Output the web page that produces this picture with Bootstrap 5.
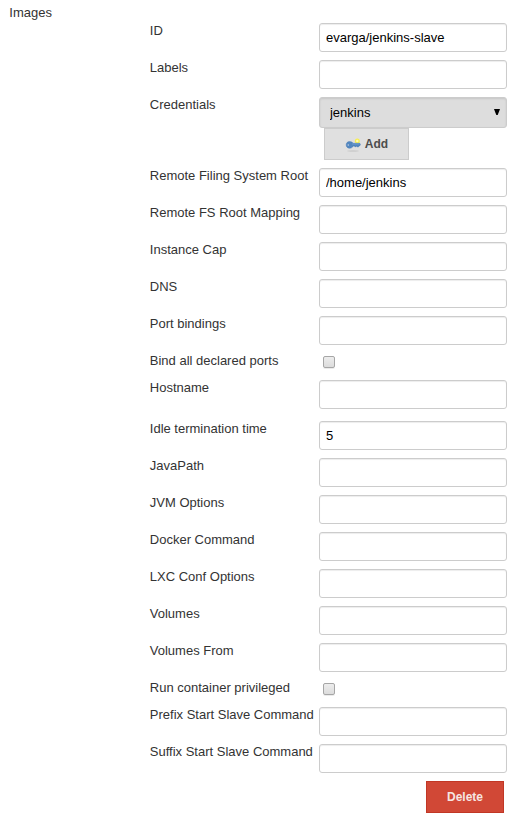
<!DOCTYPE html>
<html lang="en">
<head>
<meta charset="utf-8">
<title>Images</title>
<meta name="viewport" content="width=device-width, initial-scale=1">
<link href="https://cdn.jsdelivr.net/npm/bootstrap@5.3.0/dist/css/bootstrap.min.css" rel="stylesheet">
<style>
body{font-family:"Liberation Sans",Arial,sans-serif;font-size:13px;line-height:15px;color:#333;background:#fff}
.page{width:520px;height:822px;padding:5px 13px 0 9px;overflow:hidden}
.section-title{height:18px;padding-left:.3px}
.fields{padding-left:140.8px}
.field{height:37px}
.field-check{height:27px}
.field-tall{height:41px}
.field-cred{height:71px}
.field-label{width:169.2px;font-size:13px;line-height:15px;white-space:nowrap}
.field-box{width:188px}
.fields .form-control,.fields .form-select{font-size:13px;line-height:15px;color:#000;border:1px solid #ccc;border-radius:3px;box-shadow:inset 0 1px 1px rgba(0,0,0,.075)}
.fields .form-control{height:29px;min-height:0;padding:6px}
.fields .form-select{height:31px;padding:7px 20px 7px 10px;background:#ddd;box-shadow:inset 0 1px 2px rgba(0,0,0,.1)}
.arrow{right:7px;top:12px;width:6px;height:6px}
.add-btn{width:85px;height:32px;margin-left:5px;padding:0 0 0 1px;font-size:12px;line-height:15px;font-weight:700;color:#4d4d4d;background:#e0e0e0;border:1px solid #ccc;border-radius:0;gap:4px}
.key-icon{margin-left:-1px}
.fields .form-check-input{width:12px;height:12px;margin:3px 0 0 4px;border:1px solid #a6a6a6;border-radius:2px;background:linear-gradient(#ededed,#dcdcdc);box-shadow:0 1px 0 rgba(0,0,0,.08)}
.delete-btn{width:78px;height:32px;margin-right:3px;padding:0;font-size:12px;line-height:15px;font-weight:700;color:#f6e5e2;background:#d14836;border:1px solid #c13725;border-radius:0}
</style>
<script src="https://cdn.jsdelivr.net/npm/bootstrap@5.3.0/dist/js/bootstrap.bundle.min.js"></script>
</head>
<body>
<main class="page">
<div class="section-title">Images</div>
<form class="fields">
<div class="field d-flex"><label class="field-label" for="f1">ID</label><div class="field-box"><input id="f1" class="form-control" type="text" value="evarga/jenkins-slave"></div></div>
<div class="field d-flex"><label class="field-label" for="f2">Labels</label><div class="field-box"><input id="f2" class="form-control" type="text"></div></div>
<div class="field-cred d-flex"><label class="field-label" for="f3">Credentials</label><div class="field-box">
<div class="position-relative"><select id="f3" class="form-select"><option>jenkins</option></select>
<svg class="arrow position-absolute pe-none" viewBox="0 0 6 6"><path d="M0 0h6L3.700 6H2.300z" fill="#000"/></svg></div>
<button type="button" class="btn add-btn d-flex align-items-center justify-content-center">
<svg class="key-icon" width="16" height="16" viewBox="0 0 16 16"><ellipse cx="8" cy="15" rx="6" ry=".7" fill="#cacaca"/><circle cx="12.300" cy="5" r="2.500" fill="#f7ee50"/><circle cx="12.300" cy="5" r="1.200" fill="#fffbb5"/><path d="M4.500 5.600c1.900 0 3 .8 3.600 1.700h6.700l.6 1.200-.8 1.500h-1.100v.9h-1.300v-.9h-1v.7H9.800v-.7H8.200c-.6 1.400-1.800 2.200-3.700 2.200C2.400 12.200 1.200 10.800 1.200 8.900s1.200-3.300 3.300-3.300z" fill="#5287c0" stroke="#4479b2" stroke-width=".5"/><path d="M7 8h7.500" stroke="#7da5d0" stroke-width=".7"/><circle cx="3.300" cy="9" r=".8" fill="#c0cfdf"/></svg>
<span>Add</span></button></div></div>
<div class="field d-flex"><label class="field-label" for="f4">Remote Filing System Root</label><div class="field-box"><input id="f4" class="form-control" type="text" value="/home/jenkins"></div></div>
<div class="field d-flex"><label class="field-label" for="f5">Remote FS Root Mapping</label><div class="field-box"><input id="f5" class="form-control" type="text"></div></div>
<div class="field d-flex"><label class="field-label" for="f6">Instance Cap</label><div class="field-box"><input id="f6" class="form-control" type="text"></div></div>
<div class="field d-flex"><label class="field-label" for="f7">DNS</label><div class="field-box"><input id="f7" class="form-control" type="text"></div></div>
<div class="field d-flex"><label class="field-label" for="f8">Port bindings</label><div class="field-box"><input id="f8" class="form-control" type="text"></div></div>
<div class="field-check d-flex"><label class="field-label" for="f9">Bind all declared ports</label><div class="field-box d-flex"><input id="f9" class="form-check-input" type="checkbox"></div></div>
<div class="field-tall d-flex"><label class="field-label" for="f10">Hostname</label><div class="field-box"><input id="f10" class="form-control" type="text"></div></div>
<div class="field d-flex"><label class="field-label" for="f11">Idle termination time</label><div class="field-box"><input id="f11" class="form-control" type="text" value="5"></div></div>
<div class="field d-flex"><label class="field-label" for="f12">JavaPath</label><div class="field-box"><input id="f12" class="form-control" type="text"></div></div>
<div class="field d-flex"><label class="field-label" for="f13">JVM Options</label><div class="field-box"><input id="f13" class="form-control" type="text"></div></div>
<div class="field d-flex"><label class="field-label" for="f14">Docker Command</label><div class="field-box"><input id="f14" class="form-control" type="text"></div></div>
<div class="field d-flex"><label class="field-label" for="f15">LXC Conf Options</label><div class="field-box"><input id="f15" class="form-control" type="text"></div></div>
<div class="field d-flex"><label class="field-label" for="f16">Volumes</label><div class="field-box"><input id="f16" class="form-control" type="text"></div></div>
<div class="field d-flex"><label class="field-label" for="f17">Volumes From</label><div class="field-box"><input id="f17" class="form-control" type="text"></div></div>
<div class="field-check d-flex"><label class="field-label" for="f18">Run container privileged</label><div class="field-box d-flex"><input id="f18" class="form-check-input" type="checkbox"></div></div>
<div class="field d-flex"><label class="field-label" for="f19">Prefix Start Slave Command</label><div class="field-box"><input id="f19" class="form-control" type="text"></div></div>
<div class="field d-flex"><label class="field-label" for="f20">Suffix Start Slave Command</label><div class="field-box"><input id="f20" class="form-control" type="text"></div></div>
<div class="d-flex justify-content-end"><button type="button" class="btn delete-btn">Delete</button></div>
</form>
</main>
</body>
</html>
